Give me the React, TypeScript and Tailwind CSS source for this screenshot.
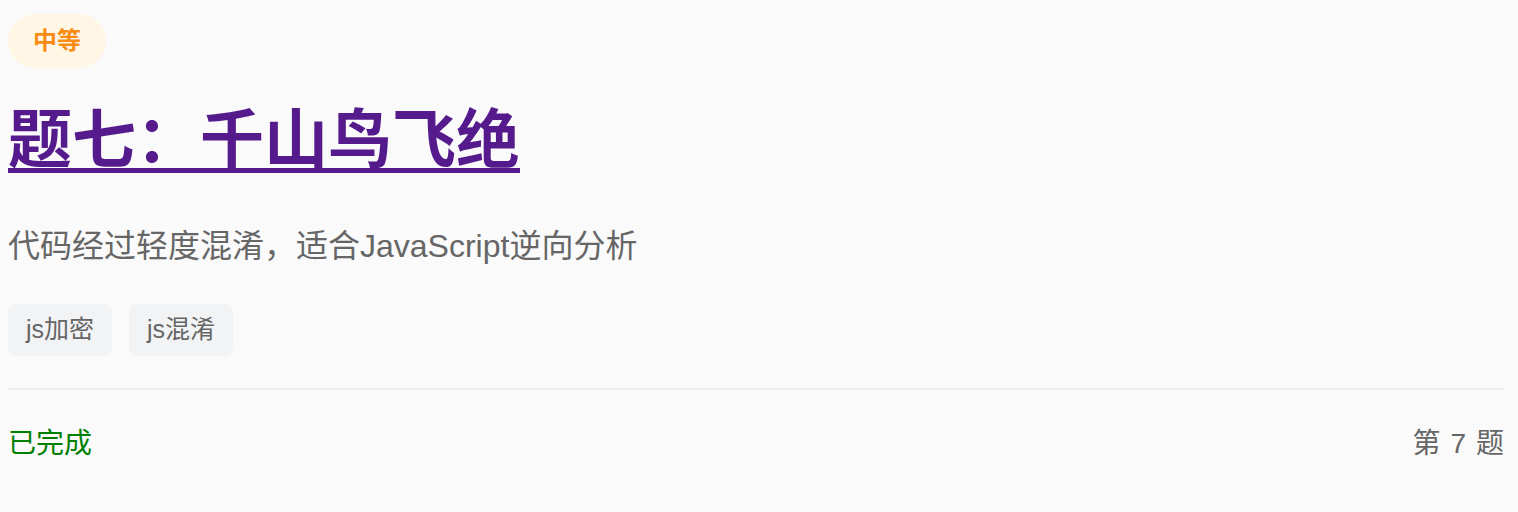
import React from "react";

const font = { fontFamily: '"Liberation Sans", "Noto Sans CJK SC", sans-serif' };

// challenge card: difficulty badge, title link, description, tags, footer
interface Challenge {
    level: string;
    title: string;
    desc: string;
    tags: string[];
    done: boolean;
    index: number;
}

const challenge: Challenge = {
    level: "中等",
    title: "题七：千山鸟飞绝",
    desc: "代码经过轻度混淆，适合JavaScript逆向分析",
    tags: ["js加密", "js混淆"],
    done: true,
    index: 7,
};

export default function App() {
    return (
        <div className="min-h-[512px] bg-[#fafafa] pl-2 pr-[14px] pt-[14px]" style={font}>
            <div className="flex flex-col">
                <div className="flex">
                    <span className="inline-flex h-[54px] items-center rounded-full bg-[#fff6e6] px-[25px] text-[24px] font-bold text-[#fa8c16]">
                        {challenge.level}
                    </span>
                </div>
                <div className="mt-[34px] flex">
                    <a href="#" className="text-[64px] font-bold leading-[77px] text-[#551a8b] underline decoration-[5px] underline-offset-[6px]">
                        {challenge.title}
                    </a>
                </div>
                <p className="mt-[43px] text-[32px] leading-[48px] text-[#666666]">{challenge.desc}</p>
                <div className="mt-[34px] flex gap-[17px]">
                    {challenge.tags.map((t) => (
                        <span key={t} className="inline-flex h-[52px] items-center rounded-lg bg-[#f2f3f5] px-[18px] text-[25px] text-[#666666]">
                            {t}
                        </span>
                    ))}
                </div>
                <div className="mt-8 border-t-2 border-[#ececec]" />
                <div className="mt-[33px] flex items-center justify-between text-[28px] leading-[42px]">
                    <span className="text-[#008000]">{challenge.done ? "已完成" : "未完成"}</span>
                    <span className="text-[#666666]">
                        第<span className="mx-[10px]">{challenge.index}</span>题
                    </span>
                </div>
            </div>
        </div>
    );
}
